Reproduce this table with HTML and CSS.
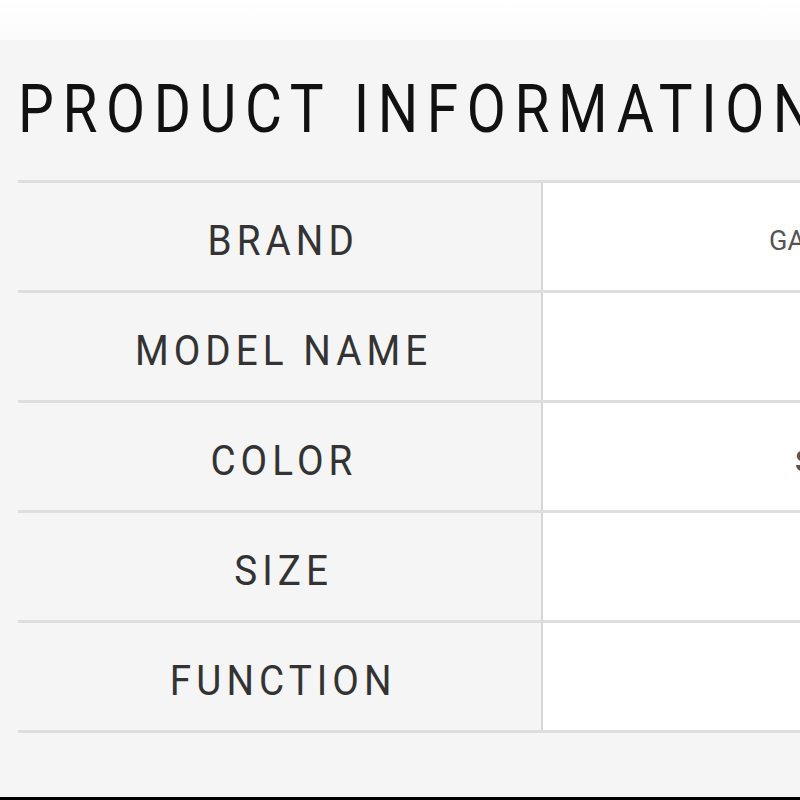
FILE: index.html
```html
<!DOCTYPE html>
<html>
<head>
<meta charset="utf-8">
<link rel="stylesheet" href="styles.css">
</head>
<body>
<div class="top"></div>
<div class="panel">
  <h1 class="title"><span class="title-text">PRODUCT INFORMATION</span></h1>
  <div class="table">
    <div class="row">
      <div class="label"><span class="label-text">BRAND</span></div>
      <div class="value"><span class="val brand">GARMIN</span></div>
    </div>
    <div class="row">
      <div class="label"><span class="label-text">MODEL NAME</span></div>
      <div class="value"></div>
    </div>
    <div class="row">
      <div class="label"><span class="label-text">COLOR</span></div>
      <div class="value"><span class="val color">SILVER</span></div>
    </div>
    <div class="row">
      <div class="label"><span class="label-text">SIZE</span></div>
      <div class="value"></div>
    </div>
    <div class="row last">
      <div class="label"><span class="label-text">FUNCTION</span></div>
      <div class="value"></div>
    </div>
  </div>
</div>
<div class="bottom"></div>
</body>
</html>
```

FILE: styles.css
```css
html, body {
  margin: 0;
  padding: 0;
  width: 800px;
  height: 800px;
  overflow: hidden;
  background: #ffffff;
  font-family: Roboto, "Liberation Sans", sans-serif;
}

.top {
  height: 40px;
  background: linear-gradient(#ffffff, #fbfbfb);
}

.panel {
  width: 1200px;
  height: 757px;
  background: #f5f5f5;
  padding: 37px 0 0 18px;
  box-sizing: border-box;
}

.title {
  margin: 0;
  font-weight: 400;
  font-size: 66px;
  line-height: 66px;
  color: #111;
  white-space: nowrap;
}

.title-text {
  display: inline-block;
  letter-spacing: 10px;
  transform: scaleX(0.86);
  transform-origin: 0 50%;
}

.table {
  margin-top: 37px;
  border-bottom: 3px solid #dedede;
}

.row {
  display: grid;
  grid-template-columns: 523px 1fr;
  height: 110px;
  border-top: 3px solid #dedede;
  box-sizing: border-box;
}

.label {
  display: flex;
  align-items: center;
  justify-content: center;
  padding: 8px 0 0 8px;
  font-size: 42px;
  color: #333;
  background: #f5f5f5;
}

.label-text {
  display: inline-block;
  letter-spacing: 5.5px;
  transform: scaleX(0.92);
}

.value {
  background: #ffffff;
  border-left: 2px solid #d6d6d6;
  display: flex;
  align-items: center;
  padding-top: 8px;
  font-size: 27px;
  color: #555;
  white-space: nowrap;
}

.val.brand {
  margin-left: 226px;
}

.val.color {
  margin-left: 252px;
  font-size: 32px;
  font-weight: 700;
}

.bottom {
  height: 3px;
  background: #000;
}
```
